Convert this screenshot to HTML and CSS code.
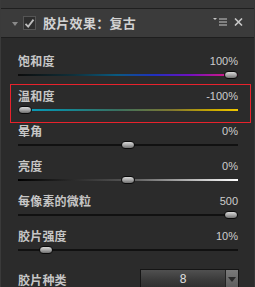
FILE: index.html
```html
<!DOCTYPE html>
<html>
<head>
<meta charset="utf-8">
<link rel="stylesheet" href="styles.css">
</head>
<body>
<div class="panel">
  <div class="topstrip"></div>
  <div class="header">
    <span class="caret"></span>
    <span class="checkbox">
      <svg width="11" height="11" viewBox="0 0 11 11"><path d="M1.5 5.8 L4.2 8.6 L9.5 1.6" fill="none" stroke="#bdbdbd" stroke-width="1.8"/></svg>
    </span>
    <span class="title">胶片效果：复古</span>
    <span class="tools">
      <svg class="menu" width="14" height="8" viewBox="0 0 14 8"><path d="M0 0 H4 L2 2 Z" fill="#c8c8c8"/><path d="M6 1 H14 M6 4 H14 M6 7 H14" stroke="#c8c8c8" stroke-width="1.2"/></svg>
      <svg class="close" width="9" height="8" viewBox="0 0 9 8"><path d="M1 0.5 L8 7.5 M8 0.5 L1 7.5" stroke="#c8c8c8" stroke-width="1.6"/></svg>
    </span>
  </div>
  <div class="body">
    <div class="row">
      <div class="labelline"><span class="label">饱和度</span><span class="value">100%</span></div>
      <div class="slider"><div class="track sat"></div><div class="thumb" style="--v:1"></div></div>
    </div>
    <div class="row highlight">
      <div class="labelline"><span class="label">温和度</span><span class="value">-100%</span></div>
      <div class="slider"><div class="track warm"></div><div class="thumb" style="--v:0"></div></div>
    </div>
    <div class="row">
      <div class="labelline"><span class="label">晕角</span><span class="value">0%</span></div>
      <div class="slider"><div class="track"></div><div class="thumb" style="--v:0.5"></div></div>
    </div>
    <div class="row">
      <div class="labelline"><span class="label">亮度</span><span class="value">0%</span></div>
      <div class="slider"><div class="track bright"></div><div class="thumb" style="--v:0.5"></div></div>
    </div>
    <div class="row">
      <div class="labelline"><span class="label">每像素的微粒</span><span class="value">500</span></div>
      <div class="slider"><div class="track"></div><div class="thumb" style="--v:1"></div></div>
    </div>
    <div class="row">
      <div class="labelline"><span class="label">胶片强度</span><span class="value">10%</span></div>
      <div class="slider"><div class="track"></div><div class="thumb" style="--v:0.1"></div></div>
    </div>
    <div class="selectrow">
      <span class="label">胶片种类</span>
      <div class="dropdown"><span class="dd-value">8</span><span class="dd-arrow"></span></div>
    </div>
  </div>
</div>
</body>
</html>
```
FILE: styles.css
```css
* { box-sizing: border-box; }
html, body {
  margin: 0;
  padding: 0;
  background: #2b2b2b;
  overflow: hidden;
}
.panel {
  width: 255px;
  height: 287px;
  background: #2b2b2b;
  font-family: "Noto Sans CJK SC", "Liberation Sans", sans-serif;
  color: #c9c9c9;
  border-left: 1px solid #3a3a3a;
  border-right: 1px solid #363636;
  overflow: hidden;
}
.topstrip {
  height: 9px;
  background: #383838;
  border-bottom: 1px solid #1f1f1f;
}
.header {
  height: 29px;
  background: #3b3b3b;
  border-bottom: 1px solid #1e1e1e;
  display: flex;
  align-items: center;
  padding-left: 11px;
  padding-right: 11px;
}
.caret {
  width: 0;
  height: 0;
  border-left: 3.5px solid transparent;
  border-right: 3.5px solid transparent;
  border-top: 4px solid #8a8a8a;
  margin-top: 1px;
}
.checkbox {
  width: 13px;
  height: 14px;
  margin-left: 5px;
  background: #2e2e2e;
  border: 1px solid #555;
  display: flex;
  align-items: center;
  justify-content: center;
}
.title {
  margin-left: 7px;
  font-size: 13px;
  font-weight: 700;
  color: #d2d2d2;
  line-height: 16px;
  letter-spacing: 0.3px;
}
.tools {
  margin-left: auto;
  display: flex;
  align-items: center;
  gap: 7px;
  margin-top: -3px;
}
.body {
  padding: 16px 16px 0 17px;
}
.row {
  position: relative;
  height: 35px;
}
.labelline {
  height: 14px;
  line-height: 14px;
  display: flex;
  justify-content: space-between;
  align-items: center;
}
.label {
  font-size: 12px;
  font-weight: 700;
  color: #c6c6c6;
  letter-spacing: 0.2px;
}
.value {
  font-family: "Liberation Sans", Arial, sans-serif;
  font-size: 11px;
  color: #cdcdcd;
}
.slider {
  position: relative;
  height: 14px;
}
.track {
  position: absolute;
  left: 0;
  right: 0;
  top: 6px;
  height: 2px;
  background: #111;
}
.track.sat {
  background: linear-gradient(to right, #0c0c0c 0%, #10303a 25%, #0a5a80 45%, #2030c0 62%, #7010c0 78%, #c01890 92%, #f02080 100%);
}
.track.warm {
  background: linear-gradient(to right, #08a0c0 0%, #108a9a 20%, #3a7060 45%, #807830 70%, #c8a800 88%, #f0c800 100%);
}
.track.bright {
  background: linear-gradient(to right, #000 0%, #555 50%, #fff 100%);
}
.thumb {
  position: absolute;
  top: 3px;
  left: calc((100% - 14px) * var(--v));
  width: 14px;
  height: 8px;
  border: 1px solid #0a0a0a;
  border-radius: 4px;
  background: linear-gradient(to bottom, #d8d8d8 0%, #a8a8a8 50%, #6e6e6e 100%);
}
.highlight::after {
  content: "";
  position: absolute;
  top: -5px;
  left: -8px;
  right: -13px;
  height: 37px;
  border: 1px solid #e8222c;
  pointer-events: none;
}
.selectrow {
  display: flex;
  align-items: center;
  justify-content: space-between;
  padding-top: 5px;
  height: 25px;
}
.selectrow .label {
  margin-top: 1px;
}
.dropdown {
  width: 99px;
  height: 20px;
  margin-right: -1px;
  border: 1px solid #151515;
  background: linear-gradient(to bottom, #505050 0%, #3c3c3c 50%, #2e2e2e 100%);
  display: flex;
}
.dd-value {
  flex: 1;
  text-align: center;
  font-family: "Liberation Sans", Arial, sans-serif;
  font-size: 12px;
  line-height: 18px;
  color: #e0e0e0;
}
.dd-arrow {
  width: 13px;
  background: linear-gradient(to bottom, #7a7a7a, #5c5c5c);
  border-left: 1px solid #222;
  position: relative;
}
.dd-arrow::after {
  content: "";
  position: absolute;
  left: 2px;
  top: 7px;
  border-left: 4px solid transparent;
  border-right: 4px solid transparent;
  border-top: 5px solid #2a2a2a;
}
```
